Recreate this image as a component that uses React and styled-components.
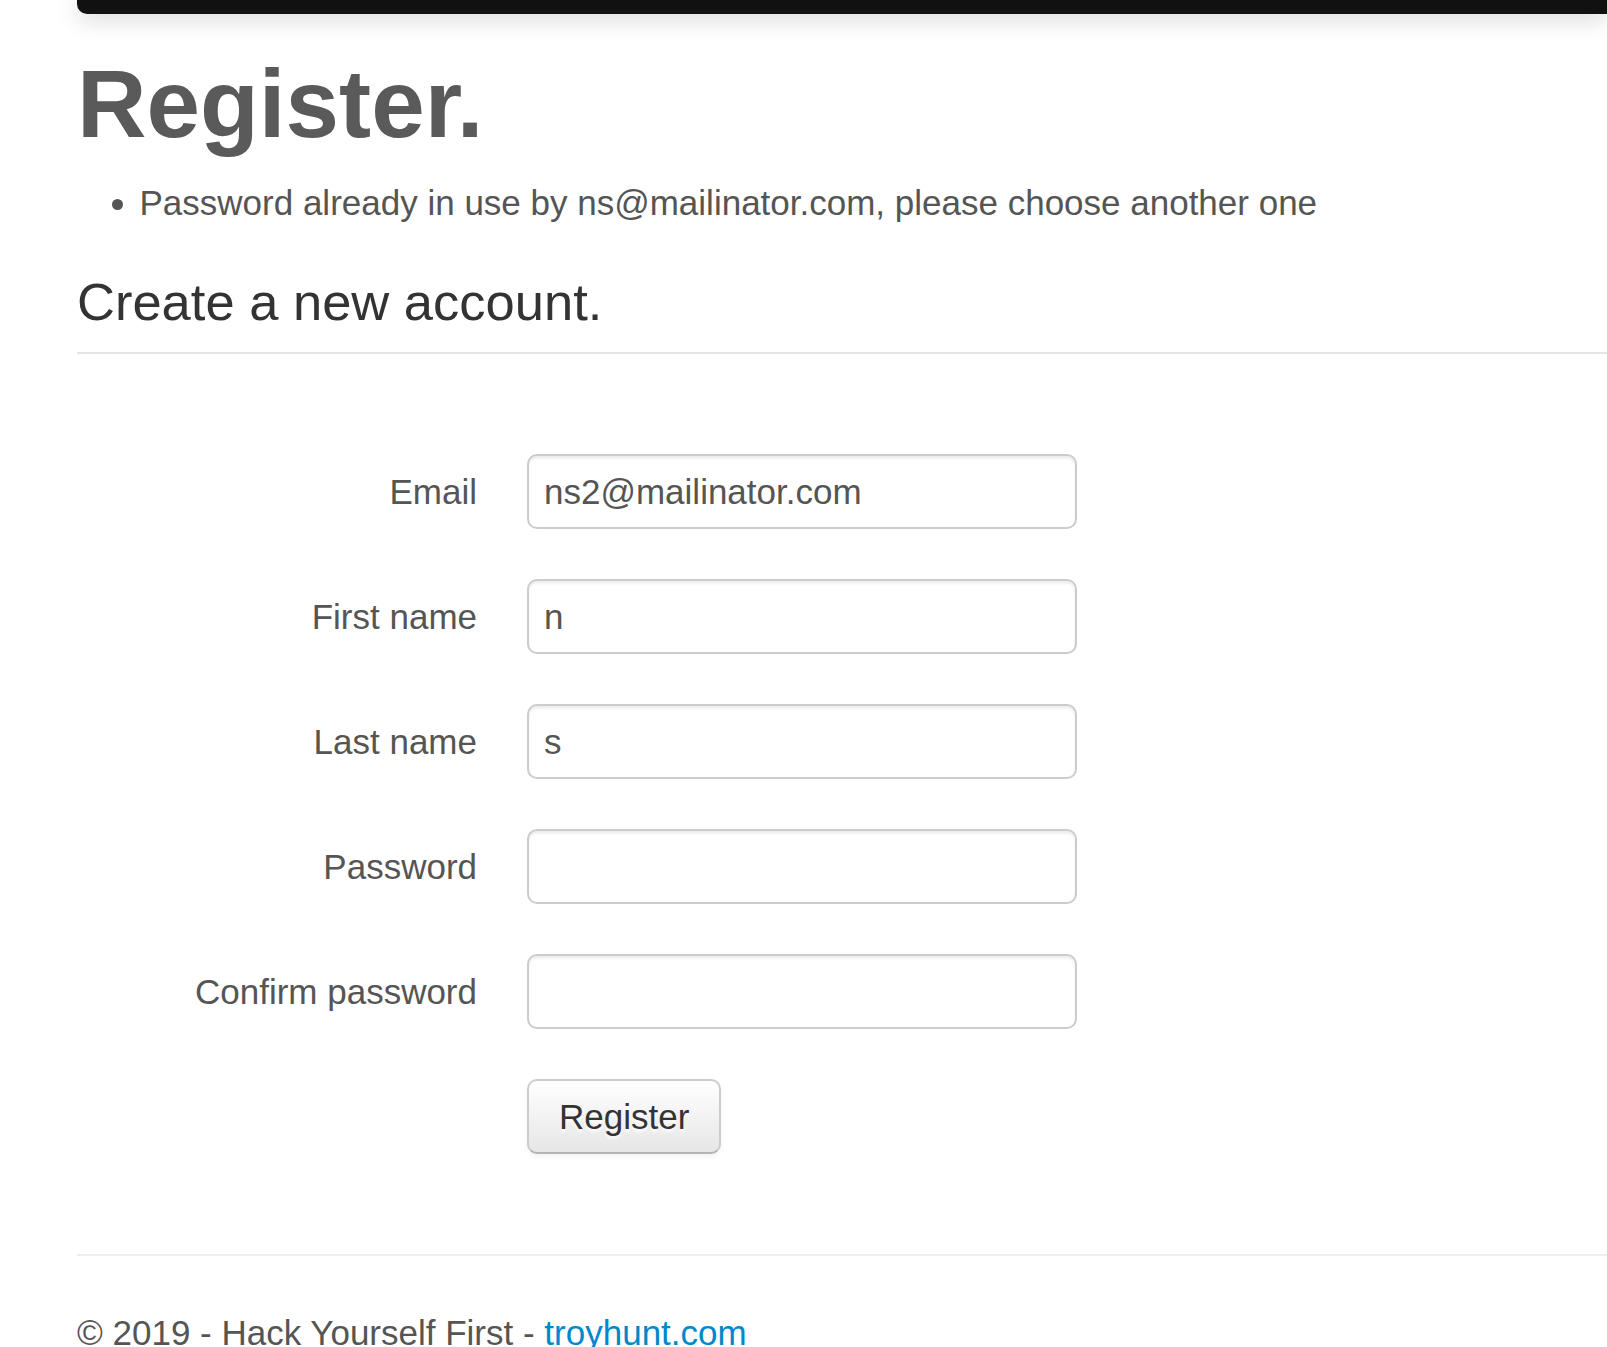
import React from 'react'
import styled, { createGlobalStyle } from 'styled-components'

// page was captured at 250% browser zoom, so every bootstrap 2 value is x2.5
const GlobalStyle = createGlobalStyle`
  html, body {
    margin: 0;
    padding: 0;
    background: #fff;
    overflow-x: hidden;
  }

  body {
    font-family: "Liberation Sans", Arial, Helvetica, sans-serif;
    font-size: 35px;
    line-height: 50px;
    color: #333;
  }
`

const Page = styled.div`
  width: 1607px;
  min-height: 1347px;
  overflow: hidden;
`

const NavbarEdge = styled.div`
  margin-left: 77px;
  height: 14px;
  background: #111;
  border-bottom-left-radius: 10px;
  box-shadow: 0 3px 25px rgba(0, 0, 0, 0.22);
`

const Container = styled.div`
  padding-left: 77px;
`

const Title = styled.h1`
  margin: 40px 0 24px;
  font-size: 96.25px;
  line-height: 100px;
  font-weight: bold;
  color: #5a5a5a;
`

const ErrorList = styled.ul`
  margin: 0 0 24px 0;
  padding-left: 62.5px;
  color: #555;
`

const ErrorItem = styled.li`
  line-height: 50px;
`

const Legend = styled.h2`
  margin: 0 0 100px;
  font-size: 52.5px;
  line-height: 100px;
  font-weight: normal;
  color: #333;
  border-bottom: 2.5px solid #e5e5e5;
`

// each control group keeps its bootstrap bottom margin, the last one included
const Form = styled.form`
  display: flex;
  flex-direction: column;
  gap: 50px;
  margin: 0;
  padding-bottom: 50px;
`

const ControlGroup = styled.div`
  display: grid;
  grid-template-columns: 400px 550px;
  column-gap: 50px;
`

const ControlLabel = styled.label`
  padding-top: 12.5px;
  text-align: right;
  color: #555;
  line-height: 50px;
`

const Controls = styled.div`
  grid-column: 2;
`

const TextInput = styled.input`
  box-sizing: border-box;
  display: block;
  width: 550px;
  height: 75px;
  margin: 0;
  padding: 10px 15px;
  font-family: inherit;
  font-size: 35px;
  line-height: 50px;
  color: #555;
  background: #fff;
  border: 2.5px solid #ccc;
  border-radius: 10px;
  box-shadow: inset 0 2.5px 2.5px rgba(0, 0, 0, 0.075);
  outline: none;
`

const Button = styled.button`
  box-sizing: border-box;
  height: 75px;
  padding: 10px 30px;
  font-family: inherit;
  font-size: 35px;
  line-height: 50px;
  color: #333;
  text-shadow: 0 2.5px 2.5px rgba(255, 255, 255, 0.75);
  background-color: #f5f5f5;
  background-image: linear-gradient(to bottom, #ffffff, #e6e6e6);
  border: 2.5px solid #ccc;
  border-bottom-color: #b3b3b3;
  border-radius: 10px;
  box-shadow: inset 0 2.5px 0 rgba(255, 255, 255, 0.2), 0 2.5px 5px rgba(0, 0, 0, 0.05);
  cursor: pointer;
`

const Divider = styled.hr`
  margin: 50px 0;
  border: 0;
  border-top: 2.5px solid #eee;
  border-bottom: 2.5px solid #fff;
`

const Footer = styled.footer`
  color: #555;

  p {
    margin: 0 0 25px;
  }
`

const FooterLink = styled.a`
  color: #0088cc;
  text-decoration: none;
`

const fields = [
  { id: 'Email', label: 'Email', type: 'text', value: 'ns2@mailinator.com' },
  { id: 'FirstName', label: 'First name', type: 'text', value: 'n' },
  { id: 'LastName', label: 'Last name', type: 'text', value: 's' },
  { id: 'Password', label: 'Password', type: 'password', value: '' },
  { id: 'ConfirmPassword', label: 'Confirm password', type: 'password', value: '' },
]

function App() {
  return (
    <Page>
      <GlobalStyle />
      <NavbarEdge />
      <Container>
        <Title>Register.</Title>
        <ErrorList>
          <ErrorItem>Password already in use by ns@mailinator.com, please choose another one</ErrorItem>
        </ErrorList>

        <Legend>Create a new account.</Legend>

        <Form onSubmit={ e => e.preventDefault() }>
          { fields.map(f => (
            <ControlGroup key={ f.id }>
              <ControlLabel htmlFor={ f.id }>{ f.label }</ControlLabel>
              <TextInput id={ f.id } type={ f.type } defaultValue={ f.value } />
            </ControlGroup>
          )) }
          <ControlGroup>
            <Controls>
              <Button type="submit">Register</Button>
            </Controls>
          </ControlGroup>
        </Form>

        <Divider />

        <Footer>
          <p>© 2019 - Hack Yourself First - <FooterLink href="#">troyhunt.com</FooterLink></p>
        </Footer>
      </Container>
    </Page>
  )
}

export default App
